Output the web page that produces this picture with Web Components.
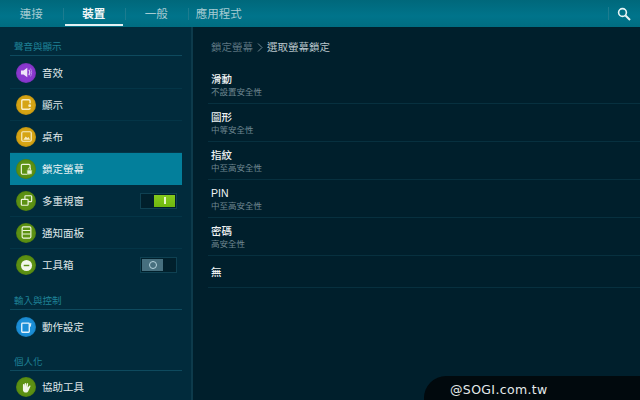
<!DOCTYPE html>
<html lang="zh-Hant"><head><meta charset="utf-8">
<style>
html,body{margin:0;padding:0;background:#001f2c;}
body{width:640px;height:400px;overflow:hidden;font-family:"Liberation Sans","Noto Sans CJK TC",sans-serif;}
</style></head><body>
<settings-app></settings-app>
<script>
const ICONS={
 sound:'<path d="M5 9.500h3.200L13 6v12l-4.800-3.500H5z" fill="#efe4fa"/><path d="M15 8.500c1.400 2 1.400 5 0 7" fill="none" stroke="#d9c2f2" stroke-width="1.500"/><path d="M17 7c2 2.800 2 7.200 0 10" fill="none" stroke="#b78fe6" stroke-width="1.200"/>',
 display:'<rect x="6" y="6" width="10.500" height="12" rx="1.500" fill="none" stroke="#f7ecc4" stroke-width="1.800"/><rect x="13" y="10.500" width="7" height="6" fill="#d3a316"/><circle cx="16" cy="13.500" r="1.800" fill="#f7ecc4"/>',
 wall:'<rect x="6" y="6" width="12" height="12" rx="1.500" fill="none" stroke="#f7ecc4" stroke-width="1.500"/><path d="M8 16l3-4 2 2 1.500-1.500L16.500 16z" fill="#f7ecc4"/>',
 lock:'<rect x="5.500" y="5.500" width="11" height="12.500" rx="1.500" fill="none" stroke="#eef5dd" stroke-width="1.500"/><rect x="12.500" y="12.500" width="6.500" height="5.500" rx=".8" fill="#eef5dd" stroke="#5c9113" stroke-width=".8"/><path d="M14.200 12.500v-1.200a1.500 1.500 0 0 1 3 0v1.200" fill="none" stroke="#eef5dd"/>',
 multi:'<rect x="10" y="6" width="8.500" height="7.500" rx="1" fill="none" stroke="#eef5dd" stroke-width="1.500"/><rect x="5.500" y="10.500" width="8.500" height="7.500" rx="1" fill="#5c9113" stroke="#eef5dd" stroke-width="1.500"/>',
 panel:'<rect x="6.500" y="5" width="11" height="14" rx="1.500" fill="none" stroke="#eef5dd" stroke-width="1.500"/><path d="M7 9.500h10M7 14h10" stroke="#eef5dd" stroke-width="1.300"/>',
 tool:'<circle cx="12" cy="12" r="7" fill="#f2f6ea"/><path d="M8.500 12h7" stroke="#5c9113" stroke-width="1.800"/>',
 motion:'<rect x="6" y="6.500" width="9.500" height="11.500" rx="1" fill="none" stroke="#e6f4fc" stroke-width="1.700"/><path d="M17.500 6.500l-.8 4.500" stroke="#e6f4fc" stroke-width="1.300"/>',
 hand:'<path d="M7.500 12.500V8.500a.9.9 0 0 1 1.800 0V11l.4-3.800a.9.9 0 0 1 1.800 0L11.500 11l.8-3.800a.9.9 0 0 1 1.800.4L13.500 12l2-2.300c.8-.8 2 0 1.400.9L14.500 16c-.6 1.500-1.700 2.400-3.200 2.400-2.400 0-3.800-1.700-3.800-3.700z" fill="#f2f6ea"/>'
};
class BaseEl extends HTMLElement{
 render(html){ if(!this.shadowRoot) this.attachShadow({mode:'open'}); this.shadowRoot.innerHTML=html; }
}
class TopBar extends BaseEl{ connectedCallback(){ this.render(`<style>
:host{display:flex;height:27px;background:linear-gradient(#00687b,#00748b 60%,#006c81);position:relative}
.tab{width:62.500px;height:27px;box-sizing:border-box;display:flex;align-items:center;justify-content:center;font-size:11.500px;color:#a6cbd2;position:relative;padding-bottom:1px;flex:none}
.tab+.tab::before{content:"";position:absolute;left:0;top:8px;height:12px;width:1px;background:#1d7c8f}
.tab.on{color:#f0f6f7;font-weight:bold}
.tab.on::after{content:"";position:absolute;left:2px;right:2px;bottom:1px;height:2px;background:#e3f1f3}
.s{margin-left:auto;width:32px;display:flex;align-items:center;justify-content:center;position:relative}
.s::before{content:"";position:absolute;left:0;top:7px;height:13px;width:1px;background:#1d7c8f}
</style>
<div class="tab">連接</div><div class="tab on">裝置</div><div class="tab">一般</div><div class="tab">應用程式</div>
<div class="s"><svg width="14" height="14" viewBox="0 0 14 14"><circle cx="5.500" cy="5.500" r="3.900" fill="none" stroke="#e8f4f5" stroke-width="1.600"/><path d="M8.500 8.500l4.500 4.500" stroke="#e8f4f5" stroke-width="2"/></svg></div>`);}}
class SectionHead extends BaseEl{ connectedCallback(){ this.render(`<style>
:host{display:flex;align-items:flex-end;box-sizing:border-box;height:var(--h,29px);margin-bottom:var(--m,1px);padding:0 0 1px 4px;border-bottom:1px solid #0e4a5e;font-size:9.500px;color:#1f8196;line-height:14px}
</style><slot></slot>`);}}
class SideRow extends BaseEl{ connectedCallback(){
 const ic=this.getAttribute('icon'),c=this.getAttribute('color'),sw=this.getAttribute('switch');
 let s='';
 if(sw==='on')s=`<div class="sw on"><i></i><b><u></u></b></div>`;
 if(sw==='off')s=`<div class="sw off"><b><em></em></b><i></i></div>`;
 this.render(`<style>
:host{display:flex;align-items:center;height:32px;box-sizing:border-box;border-bottom:1px solid #043547;color:#dfe6e8;font-size:10.500px;position:relative}
:host([last]){border-bottom:none}
:host([active]){background:#037f9b;border-bottom:none;color:#e9f2f4}
.c{width:20px;height:20px;border-radius:50%;margin-left:6px;margin-right:6px;display:flex;align-items:center;justify-content:center;background:${c};box-shadow:inset 0 0 2px rgba(0,0,0,.25);flex:none}
.t{flex:1;padding-bottom:1px}
.sw{width:37px;height:16px;margin-right:5px;box-sizing:border-box;border:1px solid #0f4152;display:flex;background:#01202c;padding:1px}
.sw i{flex:1}
.sw b{width:21px;display:flex;align-items:center;justify-content:center}
.on b{background:linear-gradient(#83c91c,#6fb80f)}
.on u{width:2px;height:7px;background:#e8f6c9}
.off b{background:#466f7e}
.off em{width:6px;height:6px;border:1.500px solid #b4d2dc;border-radius:50%}
</style><div class="c"><svg width="19" height="19" viewBox="0 0 24 24">${ICONS[ic]}</svg></div><div class="t"><slot></slot></div>${s}`);}}
class SideBar extends BaseEl{ connectedCallback(){ this.render(`<style>
:host{display:block;width:172px;padding:0 9px 0 10px;height:373px;overflow:hidden;background:#012b3c;border-right:2px solid #0d3a4b;flex:none}
</style>
<section-head>聲音與顯示</section-head>
<side-row icon="sound" color="#8a38d0">音效</side-row>
<side-row icon="display" color="#d6a414">顯示</side-row>
<side-row icon="wall" color="#d6a414">桌布</side-row>
<side-row icon="lock" color="#5c9113" active>鎖定螢幕</side-row>
<side-row icon="multi" color="#5c9113" switch="on">多重視窗</side-row>
<side-row icon="panel" color="#5c9113">通知面板</side-row>
<side-row icon="tool" color="#5c9113" switch="off" last>工具箱</side-row>
<section-head>輸入與控制</section-head>
<side-row icon="motion" color="#1b8fd8" last>動作設定</side-row>
<section-head style="--h:28px;--m:0px">個人化</section-head>
<side-row icon="hand" color="#5c9113" last>協助工具</side-row>`);}}
class OptionRow extends BaseEl{ connectedCallback(){
 const sub=this.getAttribute('sub');
 this.render(`<style>
:host{display:block;box-sizing:border-box;height:38px;padding:6px 0 0 3px;border-bottom:1px solid #07303f}
:host([tall]){height:32px;padding-top:9px}
.t{font-size:10.500px;color:#eef2f3;line-height:14px;height:14px;font-weight:500}
.s{font-size:8.500px;color:#6f8791;line-height:12px;}
</style><div class="t"><slot></slot></div>${sub?`<div class="s">${sub}</div>`:''}`);}}
class DetailPane extends BaseEl{ connectedCallback(){ this.render(`<style>
:host{display:block;flex:1;background:#001f2c;padding:0 0 0 15px}
.b{height:39px;box-sizing:border-box;padding:13px 0 0 4px;font-size:10.500px;line-height:14px;color:#5c7480;display:flex;gap:3px;margin-left:-1px}
.b span{color:#b9c6cb}.b svg{margin:3px 0 0 1px}
</style>
<div class="b">鎖定螢幕<svg width="7" height="9" viewBox="0 0 7 9"><path d="M1 .5l4 4-4 4" fill="none" stroke="#6f8791" stroke-width="1"/></svg><span>選取螢幕鎖定</span></div>
<option-row sub="不設置安全性">滑動</option-row>
<option-row sub="中等安全性">圖形</option-row>
<option-row sub="中至高安全性">指紋</option-row>
<option-row sub="中至高安全性">PIN</option-row>
<option-row sub="高安全性">密碼</option-row>
<option-row tall>無</option-row>`);}}
class WaterMark extends BaseEl{ connectedCallback(){ this.render(`<style>
:host{position:absolute;right:0;bottom:0;width:216px;height:24px;padding-left:26px;box-sizing:border-box;background:#01090d;border-top-left-radius:22px;color:#e4e9ea;font:12.500px/28px "DejaVu Sans",sans-serif;letter-spacing:.35px}
</style>@SOGI.com.tw`);}}
class SettingsApp extends BaseEl{ connectedCallback(){ this.render(`<style>
:host{display:block;width:640px;height:400px;position:relative;overflow:hidden}
.m{display:flex;height:373px}
</style><top-bar></top-bar><div class="m"><side-bar></side-bar><detail-pane></detail-pane></div><water-mark></water-mark>`);}}
customElements.define('top-bar',TopBar);
customElements.define('section-head',SectionHead);
customElements.define('side-row',SideRow);
customElements.define('side-bar',SideBar);
customElements.define('option-row',OptionRow);
customElements.define('detail-pane',DetailPane);
customElements.define('water-mark',WaterMark);
customElements.define('settings-app',SettingsApp);
</script>
</body></html>
